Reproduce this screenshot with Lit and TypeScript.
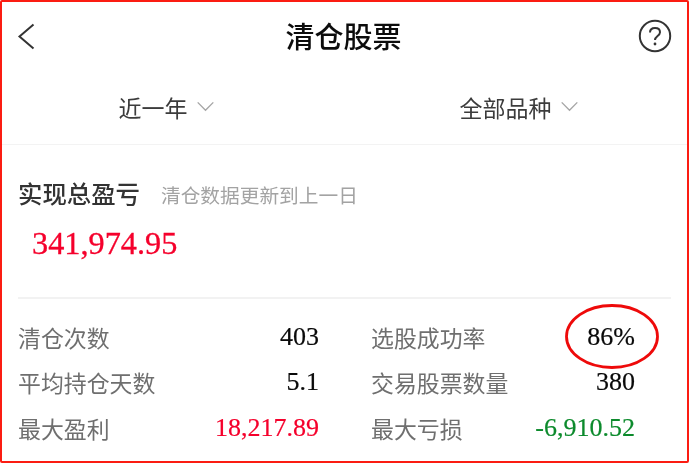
import { LitElement, html, css } from "lit";
import { customElement } from "lit/decorators.js";

const chevron = html`<svg class="chev" viewBox="0 0 20 12"><path d="M1.5 1.5 L10 10 L18.5 1.5" fill="none" stroke="#a6a6a6" stroke-width="1.5"/></svg>`;

@customElement("app-root")
export class AppRoot extends LitElement {
  static styles = css`
    :host { display: block; width: 697px; height: 471px; background: #fff; font-family: "Noto Sans CJK SC", "Noto Sans", sans-serif; }
    .frame { position: relative; box-sizing: border-box; width: 689px; height: 463px; border: 2px solid #fb1c12; border-radius: 2px; overflow: hidden; display: flex; flex-direction: column; }
    .header { height: 67px; flex: none; display: grid; grid-template-columns: 1fr auto 1fr; align-items: center; padding: 0 15px 0 13px; }
    .header svg { display: block; }
    .help { justify-self: end; }
    .title { font-size: 29px; font-weight: 500; color: #0c0c0c; line-height: 40px; margin-bottom: 2px; }
    .filters { height: 75px; flex: none; display: flex; gap: 245px; align-items: center; border-bottom: 1px solid #f3f3f3; padding-left: 116.5px; }
    .filter { display: flex; align-items: center; gap: 8px; font-size: 23px; color: #3c3c3c; }
    .chev { width: 19px; height: 11px; }
    .summary { padding: 30px 16px 0; height: 152px; flex: none; box-sizing: border-box; }
    .sumhead { display: flex; align-items: baseline; gap: 21px; }
    .sumtitle { font-size: 24.4px; font-weight: 500; color: #333; line-height: 36px; }
    .note { font-size: 19.7px; color: #a3a3a3; line-height: 36px; }
    .amount { margin: 10px 0 0 14px; font-family: "Liberation Serif", serif; font-size: 32.3px; line-height: 40px; color: #f5002c; -webkit-text-stroke: 0.3px #f5002c; }
    .stats { margin: 0 16px; border-top: 2px solid #f2f2f2; padding-top: 15px; display: grid; grid-template-columns: 301px 1fr; column-gap: 52px; grid-auto-rows: 45.5px; }
    .row { display: flex; align-items: center; justify-content: space-between; }
    .stats .row:nth-child(even) { padding-right: 36px; }
    .label { font-size: 22.9px; color: #6f6f6f; }
    .value { font-family: "Liberation Serif", serif; font-size: 26px; color: #0a0a0a; -webkit-text-stroke: 0.2px currentColor; }
    .red { color: #f5002c; }
    .green { color: #0c8a2c; }
    .header, .filters, .summary, .stats { filter: blur(0.3px); }
    .ring { position: absolute; left: 562.5px; top: 301.5px; width: 94px; height: 65px; }
  `;

  render() {
    return html`<div class="frame">
      <div class="header">
        <svg width="24" height="28" viewBox="0 0 24 28"><path d="M18.5 2.5 L4.5 14.5 L18.5 26.5" fill="none" stroke="#333" stroke-width="2"/></svg>
        <div class="title">清仓股票</div>
        <svg class="help" width="34" height="34" viewBox="0 0 34 34"><circle cx="17" cy="17" r="15.2" fill="none" stroke="#333" stroke-width="2"/><path d="M12 13.5 C12 10.5 14.2 9 17 9 C20 9 22 10.8 22 13.3 C22 17 17 17 17 21" fill="none" stroke="#333" stroke-width="2"/><circle cx="17" cy="25" r="1.4" fill="#333"/></svg>
      </div>
      <div class="filters">
        <div class="filter">近一年 ${chevron}</div>
        <div class="filter">全部品种 ${chevron}</div>
      </div>
      <div class="summary">
        <div class="sumhead"><span class="sumtitle">实现总盈亏</span><span class="note">清仓数据更新到上一日</span></div>
        <div class="amount">341,974.95</div>
      </div>
      <div class="stats">
        <div class="row"><span class="label">清仓次数</span><span class="value">403</span></div>
        <div class="row"><span class="label">选股成功率</span><span class="value">86%</span></div>
        <div class="row"><span class="label">平均持仓天数</span><span class="value">5.1</span></div>
        <div class="row"><span class="label">交易股票数量</span><span class="value">380</span></div>
        <div class="row"><span class="label">最大盈利</span><span class="value red">18,217.89</span></div>
        <div class="row"><span class="label">最大亏损</span><span class="value green">-6,910.52</span></div>
      </div>
      <svg class="ring" viewBox="0 0 94 65"><ellipse cx="47" cy="32.5" rx="45.5" ry="31" fill="none" stroke="#ee0a0a" stroke-width="2.8"/></svg>
    </div>`;
  }
}
